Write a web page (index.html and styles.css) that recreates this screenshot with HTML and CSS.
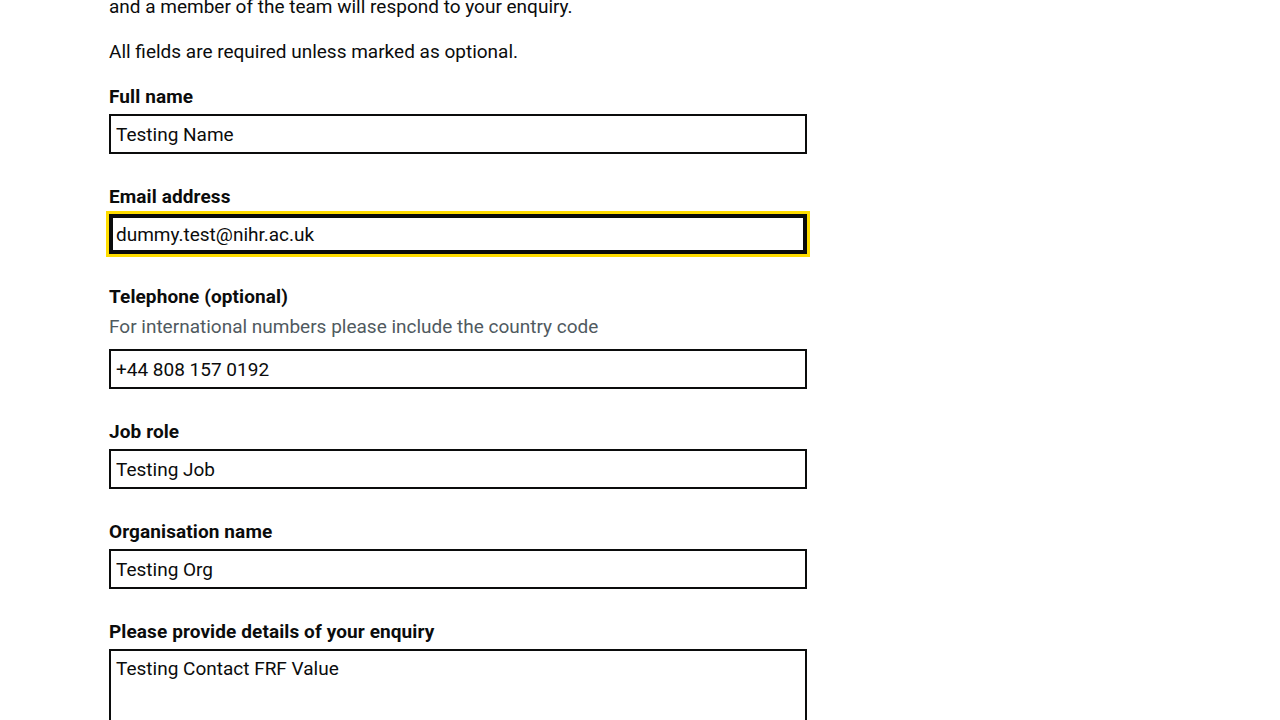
FILE: index.html
```html
<!DOCTYPE html>
<html lang="en">
<head>
<meta charset="utf-8">
<title>Contact</title>
<link rel="stylesheet" href="styles.css">
</head>
<body>
<main class="page">
  <div class="column">
    <p class="body-text">If you have a question, complete the form below<br>and a member of the team will respond to your enquiry.</p>
    <p class="body-text">All fields are required unless marked as optional.</p>
    <form class="form">
      <div class="group">
        <label class="label" for="name">Full name</label>
        <input class="input" id="name" type="text" value="Testing Name">
      </div>
      <div class="group">
        <label class="label" for="email">Email address</label>
        <input class="input input-focus" id="email" type="text" value="dummy.test@nihr.ac.uk">
      </div>
      <div class="group">
        <label class="label" for="tel">Telephone (optional)</label>
        <div class="hint">For international numbers please include the country code</div>
        <input class="input" id="tel" type="text" value="+44 808 157 0192">
      </div>
      <div class="group">
        <label class="label" for="job">Job role</label>
        <input class="input" id="job" type="text" value="Testing Job">
      </div>
      <div class="group">
        <label class="label" for="org">Organisation name</label>
        <input class="input" id="org" type="text" value="Testing Org">
      </div>
      <div class="group">
        <label class="label" for="details">Please provide details of your enquiry</label>
        <textarea class="input textarea" id="details" rows="5">Testing Contact FRF Value</textarea>
      </div>
    </form>
  </div>
</main>
</body>
</html>
```
FILE: styles.css
```css
html, body {
  margin: 0;
  padding: 0;
  background: #ffffff;
}
body {
  font-family: Roboto, "Liberation Sans", Arial, sans-serif;
  color: #0b0c0c;
  font-size: 19px;
  line-height: 25px;
}
.page {
  padding-left: 109px;
  margin-top: -31px;
}
.column {
  width: 698px;
}
.body-text {
  margin: 0 0 20px 0;
}
.form {
  margin: 0;
}
.group {
  margin-bottom: 30px;
}
.label {
  display: block;
  font-weight: 700;
  margin-bottom: 5px;
  letter-spacing: 0.1px;
}
.hint {
  color: #505a5f;
  margin-bottom: 10px;
}
.input {
  display: block;
  box-sizing: border-box;
  width: 100%;
  height: 40px;
  margin: 0;
  padding: 5px;
  border: 2px solid #0b0c0c;
  border-radius: 0;
  font-family: inherit;
  font-size: 19px;
  line-height: 25px;
  color: #0b0c0c;
  background: #ffffff;
  outline: none;
}
.input-focus {
  outline: 3px solid #ffdd00;
  outline-offset: 0;
  box-shadow: inset 0 0 0 2px #0b0c0c;
}
.textarea {
  height: auto;
  min-height: 135px;
  resize: vertical;
}
```
